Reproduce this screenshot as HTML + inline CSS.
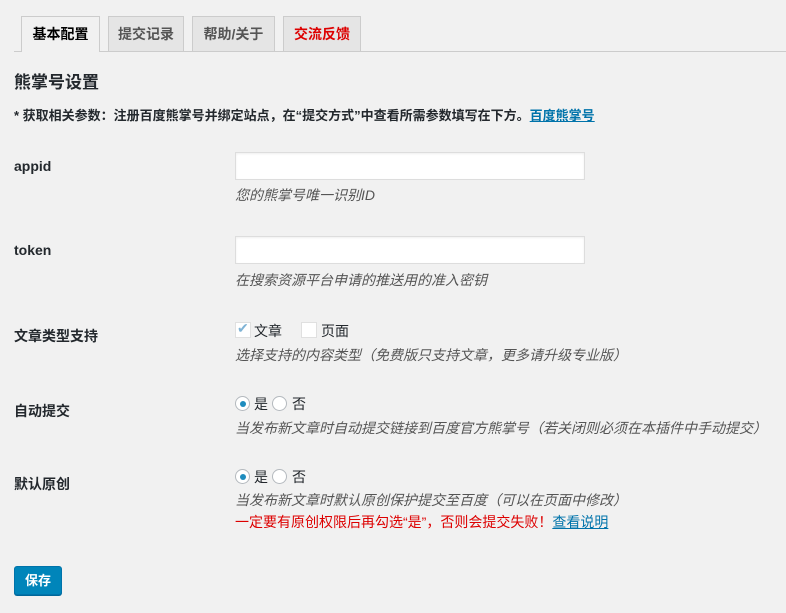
<!DOCTYPE html><html><head><meta charset="utf-8"><style>
body{margin:0;background:#f1f1f1;width:786px;height:613px;overflow:hidden;font-family:"Liberation Sans","Noto Sans CJK SC",sans-serif;font-size:13px;color:#23282d;position:relative}
.a{position:absolute;white-space:nowrap}
.tab{position:absolute;top:16px;height:34px;border:1px solid #ccc;border-bottom:none;background:#e5e5e5;font-size:14px;line-height:34px;text-align:center;color:#555;font-weight:600}
.line{position:absolute;left:14px;right:0;top:51px;border-top:1px solid #ccc}
.lbl{font-size:14px;font-weight:600}
.in{position:absolute;left:235px;width:348px;height:26px;background:#fff;border:1px solid #ddd;box-shadow:inset 0 1px 2px rgba(0,0,0,.07)}
.d{font-style:italic;color:#555;font-size:14px}
.cb{position:absolute;width:14px;height:14px;background:#fff;border:1px solid #e0e0e0}
.rd{position:absolute;width:15px;height:15px;border-radius:50%;background:#fff;border:1px solid #b4b9be;box-sizing:border-box}
.rd.on:after{content:"";position:absolute;left:3.5px;top:3.5px;width:6px;height:6px;border-radius:50%;background:#1e8cbe}
a{color:#0073aa;text-decoration:underline}
</style></head><body>
<div class="tab" style="left:108px;width:74px">提交记录</div>
<div class="tab" style="left:192px;width:81px">帮助/关于</div>
<div class="tab" style="left:283px;width:76px;color:#d00">交流反馈</div>
<div class="line"></div>
<div class="tab" style="left:21px;width:77px;background:#f1f1f1;color:#000;height:35px">基本配置</div>
<div class="a" style="left:14px;top:68px;font-size:17px;font-weight:600">熊掌号设置</div>
<div class="a" style="left:14px;top:105px;font-weight:600">* 获取相关参数：注册百度熊掌号并绑定站点，在“提交方式”中查看所需参数填写在下方。<a href="#">百度熊掌号</a></div>
<div class="a lbl" style="left:14px;top:158px">appid</div>
<div class="in" style="top:152px"></div>
<div class="a d" style="left:235px;top:185px">您的熊掌号唯一识别ID</div>
<div class="a lbl" style="left:14px;top:242px">token</div>
<div class="in" style="top:236px"></div>
<div class="a d" style="left:235px;top:270px">在搜索资源平台申请的推送用的准入密钥</div>
<div class="a lbl" style="left:14px;top:326px">文章类型支持</div>
<div class="cb" style="left:235px;top:322px"><span style="position:absolute;left:1px;top:-3px;color:#7fb3d5;font-size:14px">✔</span></div>
<div class="a" style="left:254px;top:321px;font-size:14px">文章</div>
<div class="cb" style="left:301px;top:322px"></div>
<div class="a" style="left:321px;top:321px;font-size:14px">页面</div>
<div class="a d" style="left:235px;top:345px">选择支持的内容类型（免费版只支持文章，更多请升级专业版）</div>
<div class="a lbl" style="left:14px;top:401px">自动提交</div>
<div class="rd on" style="left:235px;top:396px"></div>
<div class="a" style="left:254px;top:394px;font-size:14px">是</div>
<div class="rd" style="left:272px;top:396px"></div>
<div class="a" style="left:292px;top:394px;font-size:14px">否</div>
<div class="a d" style="left:235px;top:418px">当发布新文章时自动提交链接到百度官方熊掌号（若关闭则必须在本插件中手动提交）</div>
<div class="a lbl" style="left:14px;top:474px">默认原创</div>
<div class="rd on" style="left:235px;top:469px"></div>
<div class="a" style="left:254px;top:467px;font-size:14px">是</div>
<div class="rd" style="left:272px;top:469px"></div>
<div class="a" style="left:292px;top:467px;font-size:14px">否</div>
<div class="a d" style="left:235px;top:490px">当发布新文章时默认原创保护提交至百度（可以在页面中修改）</div>
<div class="a" style="left:235px;top:512px;color:#d00;font-size:14px">一定要有原创权限后再勾选“是”，否则会提交失败！<a href="#">查看说明</a></div>
<div class="a" style="left:14px;top:566px;width:46px;height:27px;background:#0085ba;border:1px solid #0073aa;border-radius:3px;color:#fff;font-weight:600;text-align:center;line-height:27px;box-shadow:0 1px 0 #006799">保存</div>
</body></html>
